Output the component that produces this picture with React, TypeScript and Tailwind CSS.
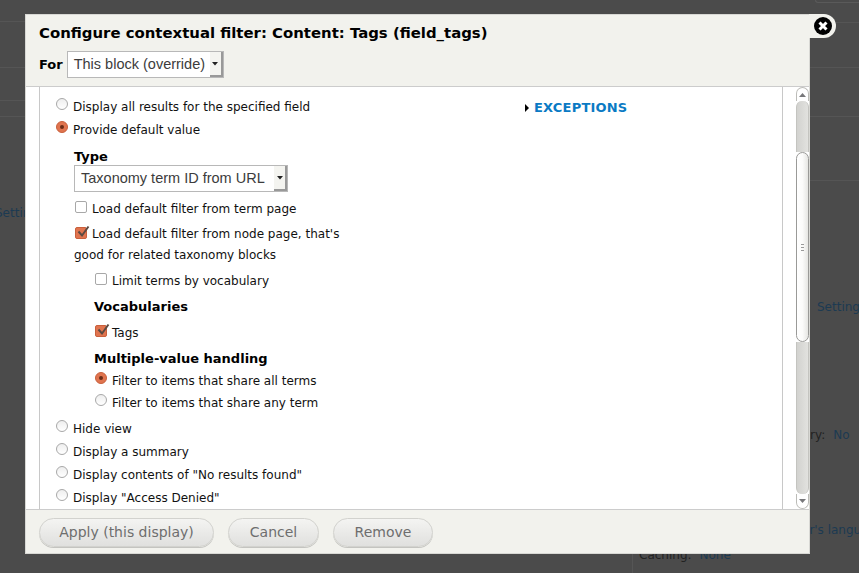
const Radio = ({ checked = false }: { checked?: boolean }) => (
  <span
    className={
      checked
        ? "relative -top-[3px] mr-[5px] flex h-[12px] w-[12px] shrink-0 items-center justify-center rounded-full border border-[#c9603c] bg-[#e0744f]"
        : "relative -top-[3px] mr-[5px] h-[12px] w-[12px] shrink-0 rounded-full border border-[#a8a8a8] bg-gradient-to-b from-[#eeeeee] to-white"
    }
  >
    {checked && <span className="h-[4px] w-[4px] rounded-full bg-[#6b2c17]" />}
  </span>
);

const Check = ({ checked = false }: { checked?: boolean }) => (
  <span
    className={
      checked
        ? "relative -top-[2px] mr-[5px] ml-[1px] inline-block h-[12px] w-[12px] shrink-0 rounded-[2px] border border-[#c9603c] bg-[#e0744f] align-middle"
        : "relative -top-[2px] mr-[5px] ml-[1px] inline-block h-[12px] w-[12px] shrink-0 rounded-[2px] border border-[#a8a8a8] bg-white align-middle"
    }
  >
    {checked && (
      <svg viewBox="0 0 14 14" className="absolute -top-[3px] left-0 h-[14px] w-[14px]">
        <path d="M2.5 6.5 L6 10.5 L12.5 1.5" fill="none" stroke="#5b4a42" strokeWidth="2" />
      </svg>
    )}
  </span>
);

const RadioRow = ({ label, checked, className }: { label: string; checked?: boolean; className: string }) => (
  <div className={`flex h-[20px] items-center ${className}`}>
    <Radio checked={checked} />
    <span>{label}</span>
  </div>
);

const CheckRow = ({ label, checked, className }: { label: string; checked?: boolean; className: string }) => (
  <div className={`flex h-[20px] items-center ${className}`}>
    <Check checked={checked} />
    <span>{label}</span>
  </div>
);

const Select = ({ label, className }: { label: string; className: string }) => (
  <div
    className={`flex h-[27px] items-center justify-between border border-[#b8b8b8] bg-white pl-[6px] font-['Liberation_Sans',sans-serif] text-[14.5px] text-[#3c3c3c] ${className}`}
  >
    <span>{label}</span>
    <span className="flex h-[25px] w-[13px] items-center justify-center border-r-2 border-b-2 border-[#999999] bg-[#f4f4f0]">
      <svg viewBox="0 0 6 4" className="h-[4px] w-[6px]">
        <path d="M0 0 H6 L3 3.5 Z" fill="#222222" />
      </svg>
    </span>
  </div>
);

const ScrollCap = ({ up }: { up: boolean }) => (
  <div
    className={
      up
        ? "flex h-[14px] shrink-0 items-center justify-center rounded-t-[7px] border border-b-0 border-[#bcbcb8] bg-white"
        : "flex h-[15px] shrink-0 items-center justify-center rounded-b-[7px] border border-t-0 border-[#bcbcb8] bg-white"
    }
  >
    <svg viewBox="0 0 7 4" className="h-[4px] w-[7px]">
      <path d={up ? "M0 4 H7 L3.5 0 Z" : "M0 0 H7 L3.5 4 Z"} fill="#77777a" />
    </svg>
  </div>
);

const Scrollbar = () => (
  <div className="flex w-[13px] shrink-0 flex-col">
    <ScrollCap up />
    <div className="h-[51px] shrink-0 rounded-t-[6px] border-x border-[#c4c4c0] bg-gradient-to-r from-[#d2d2cf] to-[#e2e2df]" />
    <div className="flex h-[190px] shrink-0 flex-col items-center justify-center gap-[2px] rounded-[7px] border border-[#9a9a98] bg-gradient-to-r from-[#ffffff] via-[#fbfbfa] to-[#e6e6e3]">
      <span className="h-px w-[3px] bg-[#999999]" />
      <span className="h-px w-[3px] bg-[#999999]" />
      <span className="h-px w-[3px] bg-[#999999]" />
    </div>
    <div className="min-h-0 flex-1 rounded-b-[6px] border-x border-[#c4c4c0] bg-gradient-to-r from-[#d2d2cf] to-[#e2e2df]" />
    <ScrollCap up={false} />
  </div>
);

const FooterButton = ({ label, className }: { label: string; className: string }) => (
  <button
    className={`h-[29px] rounded-full border border-[#d2d2ce] bg-gradient-to-b from-[#f4f4f2] to-[#e0e0de] text-center text-[14px] text-[#6e6e6e] shadow-[0_1px_0_#c4c4c0] ${className}`}
  >
    {label}
  </button>
);

const Dialog = () => (
  <div className="absolute top-[14px] left-[25px] w-[785px] border border-[#d8d8d4] bg-[#f2f2ed] text-[12px] text-[#111111]">
    {/* pestaña del botón cerrar */}
    <div className="absolute -top-px -right-[27px] flex h-[24px] w-[27px] items-center justify-center rounded-r-[12px] bg-[#f2f2ed]">
      <svg viewBox="0 0 18 18" className="h-[18px] w-[18px]">
        <circle cx="9" cy="9" r="9" fill="#000000" />
        <path d="M5.5 5.5 L12.5 12.5 M12.5 5.5 L5.5 12.5" stroke="#ffffff" strokeWidth="3" />
      </svg>
    </div>

    <div className="h-[72px] border-b border-[#cccccc] pt-[8px] pl-[13px]">
      <div className="text-[14.9px] leading-[20px] font-bold text-black">Configure contextual filter: Content: Tags (field_tags)</div>
      <div className="mt-[8px] flex items-center">
        <span className="mr-[4px] text-[13px] font-bold text-black">For</span>
        <Select label="This block (override)" className="w-[157px]" />
      </div>
    </div>

    <div className="flex h-[422px] overflow-hidden bg-white">
      <div className="w-[13px] shrink-0 bg-white" />
      <div className="flex w-[744px] shrink-0 border-x border-[#c8c8c8]">
        <div className="w-[485px] shrink-0 pt-[10px] pl-[16px]">
          <RadioRow label="Display all results for the specified field" className="" />
          <RadioRow label="Provide default value" checked className="mt-[3px]" />
          <div className="mt-[7px] pl-[18px]">
            <div className="h-[18px] text-[13px] leading-[19px] font-bold text-black">Type</div>
            <Select label="Taxonomy term ID from URL" className="w-[214px]" />
            <CheckRow label="Load default filter from term page" className="mt-[7px]" />
            <div className="mt-[5px] w-[280px] leading-[21px]">
              <Check checked />
              Load default filter from node page, that's good for related taxonomy blocks
            </div>
            <div className="pl-[20px]">
              <CheckRow label="Limit terms by vocabulary" className="mt-[5px]" />
              <div className="mt-[6px] h-[20px] text-[13px] leading-[20px] font-bold text-black">Vocabularies</div>
              <CheckRow label="Tags" checked className="mt-[6px]" />
              <div className="mt-[6px] h-[20px] text-[13px] leading-[20px] font-bold text-black">Multiple-value handling</div>
              <RadioRow label="Filter to items that share all terms" checked className="mt-[2px] pl-[1px]" />
              <RadioRow label="Filter to items that share any term" className="mt-[2px] pl-[1px]" />
            </div>
          </div>
          <RadioRow label="Hide view" className="mt-[6px]" />
          <RadioRow label="Display a summary" className="mt-[3px]" />
          <RadioRow label={'Display contents of "No results found"'} className="mt-[3px]" />
          <RadioRow label={'Display "Access Denied"'} className="mt-[3px]" />
        </div>
        <div className="mt-[11px] flex h-[20px] items-center">
          <svg viewBox="0 0 4 8" className="mr-[5px] h-[8px] w-[4px]">
            <path d="M0 0 L4 4 L0 8 Z" fill="#000000" />
          </svg>
          <span className="text-[13px] font-bold tracking-[0.2px] text-[#0a7ac4]">EXCEPTIONS</span>
        </div>
      </div>
      <div className="w-[13px] shrink-0 bg-white" />
      <Scrollbar />
      <div className="flex-1 bg-white" />
    </div>

    <div className="flex h-[44px] items-start gap-[14px] border-t border-[#cccccc] pt-[8px] pl-[13px]">
      <FooterButton label="Apply (this display)" className="w-[175px]" />
      <FooterButton label="Cancel" className="w-[91px]" />
      <FooterButton label="Remove" className="w-[100px]" />
    </div>
  </div>
);

// pagina de fondo, oscurecida por el overlay
const Backdrop = () => (
  <div className="flex h-[573px] w-[859px] overflow-hidden bg-[#4b4b4b] text-[12px] text-[#1c3a52]">
    <div className="w-[25px] shrink-0">
      <div className="mt-[21px] h-[46px] border-t border-[#555555]" />
      <div className="h-[33px] border-t border-[#555555]" />
      <div className="h-[16px] border-t border-[#555555]" />
      <div className="h-[88px] border-t border-[#555555]" />
      <div className="-ml-[5px] whitespace-nowrap">Settings</div>
    </div>
    <div className="relative flex-1">
      <div className="absolute top-0 right-0 h-[3px] w-[44px] rounded-bl-[6px] border-b border-l border-[#5a5a5a]" />
      <div className="absolute top-[22px] right-0 h-[45px] w-[49px] border-t border-[#555555]" />
      <div className="absolute top-[67px] right-0 h-[49px] w-[49px] border-t border-[#555555]" />
      <div className="absolute top-[116px] right-0 h-[64px] w-[49px] border-t border-[#555555]" />
      <div className="absolute top-[180px] right-0 h-[60px] w-[49px] border-t border-[#555555]" />
      <div className="absolute top-[298px] left-[792px] whitespace-nowrap">Settings</div>
      <div className="absolute top-[426px] left-[785px] whitespace-nowrap">
        <span className="text-[#222222]">ry:</span>
        <span className="ml-[8px]">No</span>
      </div>
      <div className="absolute top-[521px] left-[777px] whitespace-nowrap">er's language</div>
      <div className="absolute top-[554px] left-[607px] h-[19px] border-l border-[#555555]" />
      <div className="absolute top-[546px] left-[614px] whitespace-nowrap">
        <span className="text-[#222222]">Caching:</span>
        <span className="ml-[8px]">None</span>
      </div>
    </div>
  </div>
);

export default function App() {
  return (
    <div className="relative h-[573px] w-[859px] overflow-hidden font-['DejaVu_Sans',sans-serif]">
      <Backdrop />
      <Dialog />
    </div>
  );
}
